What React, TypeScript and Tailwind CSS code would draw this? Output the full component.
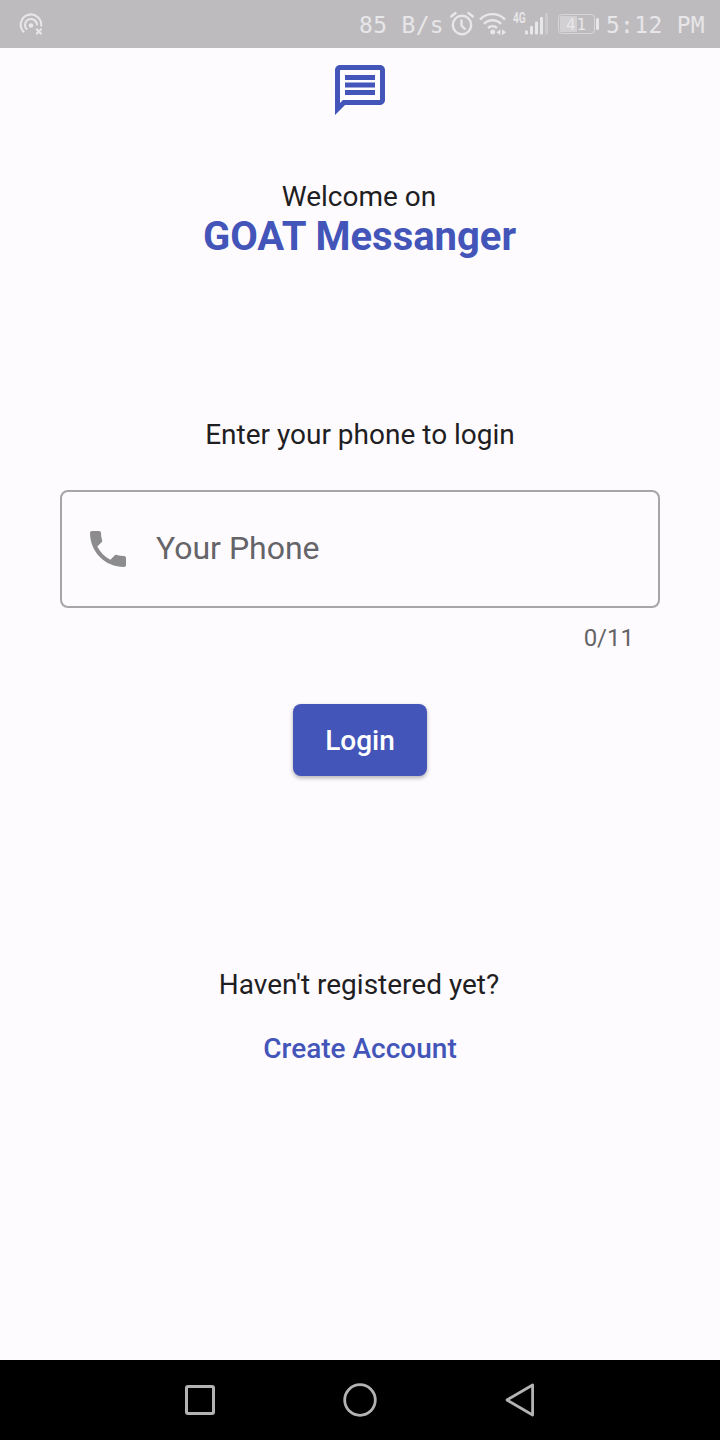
import React from "react";

function StatusBar() {
  return (
    <header className="flex h-12 shrink-0 items-center bg-[#bebbbf] pl-[18px] pr-[15px] font-['DejaVu_Sans_Mono',monospace] text-[23px] leading-[48px] tracking-[0.3px] text-[#e7e6e8]">
      <svg width="26" height="24" viewBox="0 0 26 24" fill="none" stroke="currentColor" strokeWidth="2" className="mt-px">
        <path d="M6.1 19.2A10.2 10.2 0 1 1 23 13.5" />
        <path d="M9.2 16.6A6 6 0 1 1 19 12.4" />
        <circle cx="13" cy="12.5" r="2.3" fill="currentColor" stroke="none" />
        <path d="m18.2 15.8 5.4 5.4m0-5.4-5.4 5.4" />
      </svg>
      <span className="ml-auto whitespace-pre pt-0.5">85 B/s</span>
      <svg width="24" height="26" viewBox="0 0 24 26" fill="none" stroke="currentColor" strokeWidth="2.4" className="ml-[6px]">
        <circle cx="12" cy="14" r="9.2" />
        <path d="M11.5 8.5v6l3.8 4" />
        <path d="M1.2 5.5 5.5 2M22.8 5.5 18.5 2" strokeLinecap="round" />
      </svg>
      <svg width="28" height="24" viewBox="0 0 28 24" fill="none" stroke="currentColor" strokeWidth="2.4" className="ml-[5px]">
        <path d="M1 7.6a17 17 0 0 1 25 0" />
        <path d="M5 11.8a12 12 0 0 1 17 0" />
        <path d="M9 16a6.7 6.7 0 0 1 9 0" />
        <circle cx="13.7" cy="20" r="2.5" fill="currentColor" stroke="none" />
        <path d="m21.4 17.2-4 3 4 3zM23 17.2l4 3-4 3z" fill="currentColor" stroke="none" />
      </svg>
      <div className="ml-[6px] flex h-6 items-start">
        <span className="w-3 origin-left scale-x-[.72] font-['Roboto',sans-serif] text-[14px] font-bold leading-[13px] tracking-normal">4G</span>
        <svg width="24" height="24" viewBox="0 0 24 24" fill="currentColor">
          <rect x="0" y="18.5" width="3" height="4" rx="1" />
          <rect x="5" y="14" width="3" height="8.5" rx="1" />
          <rect x="10" y="9.5" width="3" height="13" rx="1" />
          <rect x="15" y="5" width="3" height="17.5" rx="1" />
          <rect x="20" y="1" width="3" height="21.5" rx="1" opacity=".35" />
        </svg>
      </div>
      <div className="ml-[9px] flex items-center">
        <div className="flex h-5 w-[37px] rounded border-[1.5px] border-[#d8d6d9] p-px">
          <div className="flex h-full w-[17px] items-center overflow-visible bg-[#d2d0d3] pl-1.5">
            <span className="pt-px text-[16px] leading-4 tracking-[1px]">41</span>
          </div>
        </div>
        <div className="ml-px h-3 w-[3px] rounded-sm bg-[#e7e6e8]" />
      </div>
      <span className="ml-[7px] whitespace-pre pt-0.5">5:12 PM</span>
    </header>
  );
}

function NavigationBar() {
  return (
    <nav className="flex h-20 shrink-0 items-center justify-center gap-[120px] bg-black">
      <svg width="40" height="40" viewBox="0 0 40 40" fill="none" stroke="#b3b3b3" strokeWidth="3">
        <rect x="6.5" y="6.5" width="27" height="27" rx="1.5" />
      </svg>
      <svg width="40" height="40" viewBox="0 0 40 40" fill="none" stroke="#b3b3b3" strokeWidth="2.8">
        <circle cx="20" cy="20" r="15.3" />
      </svg>
      <svg width="40" height="40" viewBox="0 0 40 40" fill="none" stroke="#b3b3b3" strokeWidth="2.8" strokeLinejoin="round">
        <path d="M32.6 5v30L7 20z" />
      </svg>
    </nav>
  );
}

export default function App() {
  return (
    <div className="flex h-[1440px] w-[720px] flex-col bg-[#fefbff] font-['Roboto',sans-serif] text-[28px] leading-10 text-[#1f1e22]">
      <StatusBar />
      <main className="flex flex-1 flex-col items-center px-[60px] pt-3">
        <svg width="60" height="60" viewBox="0 0 24 24" fill="#4355b9">
          <path d="M4 4h16v12H5.17L4 17.17V4m0-2c-1.1 0-1.99.9-1.99 2L2 22l4-4h14c1.1 0 2-.9 2-2V4c0-1.1-.9-2-2-2H4zm2 10h12v2H6v-2zm0-3h12v2H6V9zm0-3h12v2H6V6z" />
        </svg>
        <p className="mt-[57px] pr-0.5">Welcome on</p>
        <h1 className="pr-px text-[40px] font-bold text-[#4355b9]">GOAT Messanger</h1>
        <p className="mt-[158px]">Enter your phone to login</p>
        <label className="mt-[35px] flex h-[118px] w-full items-center rounded-lg border-2 border-[#a6a5a8] pl-[22px]">
          <svg width="48" height="48" viewBox="0 0 24 24" fill="#8c8b8e">
            <path d="M6.62 10.79c1.44 2.83 3.76 5.14 6.59 6.59l2.2-2.2c.27-.27.67-.36 1.02-.24 1.12.37 2.33.57 3.57.57.55 0 1 .45 1 1V20c0 .55-.45 1-1 1-9.39 0-17-7.61-17-17 0-.55.45-1 1-1h3.5c.55 0 1 .45 1 1 0 1.25.2 2.45.57 3.57.11.35.03.74-.25 1.02l-2.2 2.2z" />
          </svg>
          <input type="tel" maxLength={11} placeholder="Your Phone" className="mb-0.5 ml-6 w-[400px] bg-transparent text-[32px] leading-10 outline-none placeholder:text-[#656468]" />
        </label>
        <p className="mt-[14px] self-end pr-[26px] text-[24px] leading-8 text-[#656468]">0/11</p>
        <button className="mt-[50px] h-[72px] w-[134px] rounded-lg bg-[#4355b9] pt-0.5 font-medium text-white shadow-[0_2px_4px_rgba(0,0,0,0.3)]">Login</button>
        <p className="mt-[189px] pr-0.5">Haven't registered yet?</p>
        <button className="mt-6 font-medium text-[#4355b9]">Create Account</button>
      </main>
      <NavigationBar />
    </div>
  );
}
